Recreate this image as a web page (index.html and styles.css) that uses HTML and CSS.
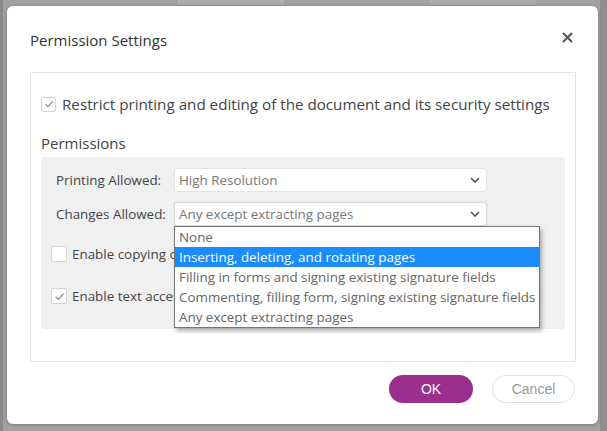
FILE: index.html
```html
<!DOCTYPE html>
<html>
<head>
  <meta charset="UTF-8">
  <title>Permission Settings</title>
  <link rel="stylesheet" href="styles.css">
</head>
<body>

<div class="backdrop">
  <div class="ghost ghost-a"></div>
  <div class="ghost ghost-b"></div>
</div>

<div class="dialog">
  <!-- Header -->
  <div class="dialog-header">
    <span class="dialog-title">Permission Settings</span>
    <span class="close-btn">
      <svg width="11" height="11" viewBox="0 0 11 11"><path d="M1 1 L10 10 M10 1 L1 10" stroke="#555" stroke-width="2" fill="none"/></svg>
    </span>
  </div>

  <!-- Body -->
  <div class="dialog-body">
    <div class="check-row restrict">
      <span class="cb checked">
        <svg width="10" height="10" viewBox="0 0 10 10"><path d="M1.5 5.2 L4 7.5 L8.7 2.5" stroke="#999" stroke-width="1.3" fill="none"/></svg>
      </span>
      <span>Restrict printing and editing of the document and its security settings</span>
    </div>

    <div class="section-label">Permissions</div>

    <div class="panel">
      <div class="field">
        <span class="field-label">Printing Allowed:</span>
        <div class="select">
          <span>High Resolution</span>
          <svg class="chev" width="10" height="6" viewBox="0 0 10 6"><path d="M1 1 L5 5 L9 1" stroke="#555" stroke-width="1.6" fill="none"/></svg>
        </div>
      </div>

      <div class="field second">
        <span class="field-label">Changes Allowed:</span>
        <div class="select open">
          <span>Any except extracting pages</span>
          <svg class="chev" width="10" height="6" viewBox="0 0 10 6"><path d="M1 1 L5 5 L9 1" stroke="#555" stroke-width="1.6" fill="none"/></svg>
          <ul class="dropdown">
            <li>None</li>
            <li class="active">Inserting, deleting, and rotating pages</li>
            <li>Filling in forms and signing existing signature fields</li>
            <li>Commenting, filling form, signing existing signature fields</li>
            <li>Any except extracting pages</li>
          </ul>
        </div>
      </div>

      <div class="check-row copy">
        <span class="cb"></span>
        <span class="cut">Enable copying of text, images and other content</span>
      </div>

      <div class="check-row access">
        <span class="cb checked">
          <svg width="11" height="11" viewBox="0 0 10 10"><path d="M1.5 5.2 L4 7.5 L8.7 2.5" stroke="#999" stroke-width="1.3" fill="none"/></svg>
        </span>
        <span class="cut">Enable text access for screen reader devices</span>
      </div>
    </div>
  </div>

  <!-- Footer -->
  <div class="dialog-footer">
    <button class="btn btn-ok">OK</button>
    <button class="btn btn-cancel">Cancel</button>
  </div>
</div>

</body>
</html>
```

FILE: styles.css
```css
body {
  margin: 0;
  width: 607px;
  height: 431px;
  overflow: hidden;
  font-family: "Open Sans", "Noto Sans", sans-serif;
  color: #444;
  background: linear-gradient(to right, #8a8a8a 0, #8a8a8a 3px, #a3a3a3 3px, #a3a3a3 600px, #8f8f8f 600px);
  position: relative;
  padding-top: 6px;
  box-sizing: border-box;
}
.backdrop {
  position: absolute;
  top: 0;
  left: 0;
  right: 0;
  height: 6px;
}
.ghost {
  position: absolute;
  top: -4px;
  height: 8px;
  border: 1px solid #9a9a9a;
  border-radius: 3px;
  background: #adadad;
}
.ghost-a { left: 176px; width: 108px; }
.ghost-b { left: 428px; width: 108px; }

.dialog {
  position: relative;
  margin-left: 7px;
  width: 591px;
  height: 418px;
  background: #fff;
  border-radius: 6px;
  box-shadow: 0 1px 4px rgba(0, 0, 0, 0.25);
  box-sizing: border-box;
  display: flex;
  flex-direction: column;
}
.dialog-header {
  height: 66px;
  padding: 24px 25px 0 23px;
  box-sizing: border-box;
  display: flex;
  justify-content: space-between;
  align-items: flex-start;
}
.dialog-title {
  font-size: 15px;
  line-height: 20px;
  color: #333;
}
.close-btn {
  margin-top: 2px;
  display: flex;
}
.dialog-body {
  margin: 0 22px 0 23px;
  height: 290px;
  border: 1px solid #e3e3e3;
  box-sizing: border-box;
  padding: 21px 10px 0 10px;
}
.check-row {
  display: flex;
  align-items: center;
  height: 20px;
  white-space: nowrap;
}
.check-row.restrict {
  font-size: 15.2px;
  gap: 6px;
}
.cb {
  width: 13px;
  height: 13px;
  flex: none;
  border: 1px solid #d4d4d4;
  border-radius: 2px;
  background: #fff;
  display: flex;
  align-items: center;
  justify-content: center;
}
.section-label {
  margin-top: 19px;
  line-height: 20px;
  font-size: 15px;
}
.panel {
  margin-top: 4px;
  height: 172px;
  background: #f0f0f0;
  border-radius: 3px;
  box-sizing: border-box;
  padding: 11px 0 0 15px;
  font-size: 13.4px;
  position: relative;
}
.field {
  display: flex;
  align-items: center;
  height: 24px;
}
.field.second {
  margin-top: 10px;
}
.field-label {
  width: 118px;
  flex: none;
  white-space: nowrap;
}
.select {
  position: relative;
  width: 313px;
  height: 24px;
  box-sizing: border-box;
  border: 1px solid #e4e4e4;
  border-radius: 3px;
  background: #fff;
  color: #777;
  display: flex;
  align-items: center;
  justify-content: space-between;
  padding: 0 6px 0 4px;
}
.select.open {
  border-color: #d8d8d8;
  box-shadow: 0 0 2px rgba(0, 0, 0, 0.12);
}
.dropdown {
  position: absolute;
  top: 23px;
  left: -1px;
  width: 364px;
  margin: 0;
  padding: 0;
  list-style: none;
  background: #fff;
  border: 1px solid #777;
  box-shadow: 2px 3px 4px rgba(0, 0, 0, 0.3);
  z-index: 2;
}
.dropdown li {
  height: 20px;
  line-height: 20px;
  padding-left: 4px;
  color: #666;
  white-space: nowrap;
}
.dropdown li.active {
  background: #1a8cff;
  color: #fff;
}
.check-row.copy {
  margin-top: 18px;
  margin-left: -5px;
  gap: 5px;
}
.check-row.access {
  margin-top: 22px;
  margin-left: -5px;
  gap: 5px;
}
.cut {
  width: 102px;
  overflow: hidden;
}
.panel .cb {
  width: 14px;
  height: 14px;
}
.dialog-footer {
  display: flex;
  justify-content: flex-end;
  gap: 19px;
  padding: 13px 23px 0 0;
}
.btn {
  height: 28px;
  border-radius: 14px;
  font-family: "Liberation Sans", Arial, sans-serif;
  font-size: 14px;
  cursor: pointer;
}
.btn-ok {
  width: 84px;
  border: none;
  background: #9a2f8e;
  color: #fff;
}
.btn-cancel {
  width: 83px;
  border: 1px solid #e0e0e0;
  background: #fff;
  color: #999;
}
```
